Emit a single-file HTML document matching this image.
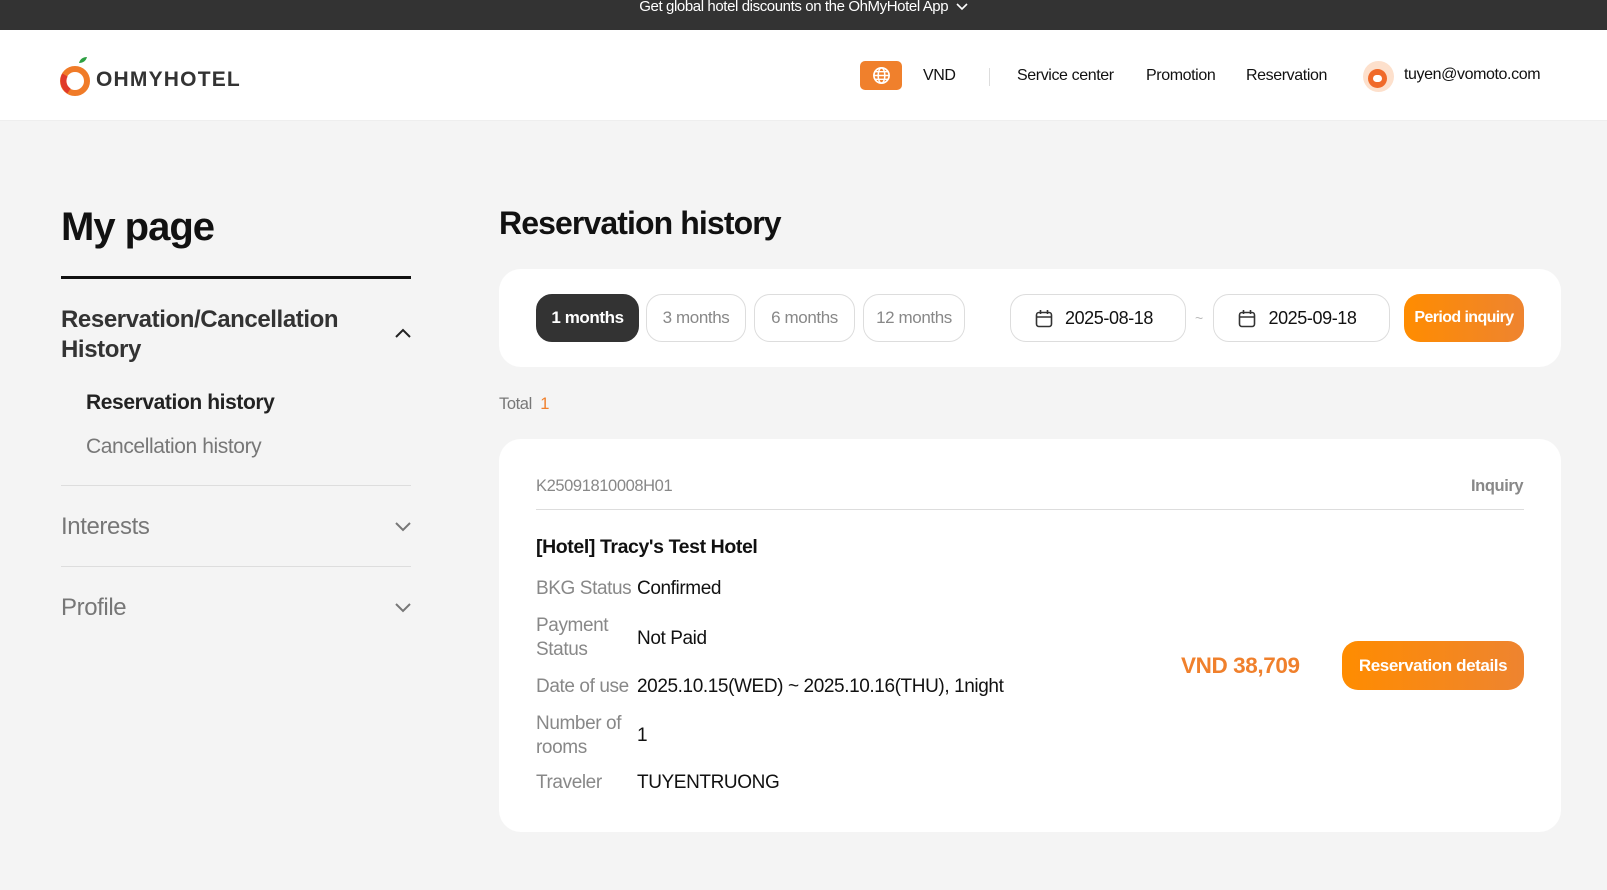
<!DOCTYPE html>
<html><head><meta charset="utf-8"><style>
*{margin:0;padding:0;box-sizing:border-box}
body{width:1607px;height:890px;overflow:hidden;background:#f4f4f4;font-family:"Liberation Sans",sans-serif;color:#222;position:relative;letter-spacing:-0.4px}
.a{position:absolute;white-space:nowrap}
.top{left:0;top:0;width:1607px;height:30px;background:#333;color:#fff;font-size:15px;text-align:center;line-height:14px}
.hdr{left:0;top:30px;width:1607px;height:91px;background:#fff;border-bottom:1px solid #eee}
.nav{font-size:16px;color:#111;top:67px}
.card{background:#fff;border-radius:22px}
.pill{top:294px;height:48px;border:1px solid #ddd;border-radius:16px;font-size:17px;color:#888;text-align:center;line-height:46px;background:#fff}
.og{background:linear-gradient(90deg,#ff8c00,#ee8430);color:#fff;font-weight:bold;border-radius:16px;text-align:center}
.lb{left:536px;font-size:19px;color:#888}
.vl{left:637px;font-size:19px;color:#111}
.side{font-size:24px;color:#777}
.hr{height:1px;background:#ddd}
</style></head><body>
<div class="a top">Get global hotel discounts on the OhMyHotel App &nbsp;<svg width="12" height="8" viewBox="0 0 12 8"><path d="M1 1l5 5 5-5" stroke="#fff" stroke-width="1.6" fill="none"/></svg></div>
<div class="a hdr"></div>
<svg class="a" style="left:60px;top:55px" width="34" height="42" viewBox="0 0 34 42"><path d="M19 8c1-4 4-6 8-6-1 4-4 6-8 6z" fill="#2ea043"/><circle cx="15" cy="26" r="12" fill="none" stroke="#f07b28" stroke-width="6"/><path d="M5 20a12 12 0 0 0 4 16" stroke="#e03a2a" stroke-width="6" fill="none"/></svg>
<div class="a" style="left:96px;top:68px;font-size:21px;font-weight:bold;color:#333;letter-spacing:1.2px">OHMYHOTEL</div>
<div class="a" style="left:860px;top:61px;width:42px;height:29px;background:#f0802c;border-radius:5px"></div>
<svg class="a" style="left:872px;top:66px" width="19" height="19" viewBox="0 0 20 20"><circle cx="10" cy="10" r="8" fill="none" stroke="#fff" stroke-width="1.8"/><ellipse cx="10" cy="10" rx="3.5" ry="8" fill="none" stroke="#fff" stroke-width="1.6"/><path d="M2 10h16M3 6h14M3 14h14" stroke="#fff" stroke-width="1.5"/></svg>
<div class="a nav" style="left:923px">VND</div>
<div class="a" style="left:989px;top:68px;width:1px;height:18px;background:#ddd"></div>
<div class="a nav" style="left:1017px">Service center</div>
<div class="a nav" style="left:1146px">Promotion</div>
<div class="a nav" style="left:1246px">Reservation</div>
<div class="a" style="left:1363px;top:61px;width:31px;height:31px;border-radius:50%;background:#fde0cc"></div>
<div class="a" style="left:1368px;top:69px;width:19px;height:19px;border-radius:50%;background:#f06a2a"></div>
<div class="a" style="left:1373px;top:75px;width:9px;height:7px;border-radius:4px;background:#fff"></div>
<div class="a nav" style="left:1404px;top:66px">tuyen@vomoto.com</div>

<div class="a" style="left:61px;top:205px;font-size:40px;font-weight:bold;color:#111;letter-spacing:-1px">My page</div>
<div class="a" style="left:61px;top:276px;width:350px;height:3px;background:#111"></div>
<div class="a" style="left:61px;top:305px;font-size:24px;font-weight:bold;color:#333;line-height:30px;white-space:normal;width:300px">Reservation/Cancellation History</div>
<svg class="a" style="left:394px;top:328px" width="18" height="11" viewBox="0 0 18 11"><path d="M2 9l7-7 7 7" stroke="#222" stroke-width="2" fill="none"/></svg>
<div class="a" style="left:86px;top:391px;font-size:21px;font-weight:bold;color:#222">Reservation history</div>
<div class="a" style="left:86px;top:435px;font-size:21px;color:#777">Cancellation history</div>
<div class="a hr" style="left:61px;top:485px;width:350px"></div>
<div class="a side" style="left:61px;top:513px">Interests</div>
<svg class="a" style="left:394px;top:521px" width="18" height="11" viewBox="0 0 18 11"><path d="M2 2l7 7 7-7" stroke="#777" stroke-width="2" fill="none"/></svg>
<div class="a hr" style="left:61px;top:566px;width:350px"></div>
<div class="a side" style="left:61px;top:594px">Profile</div>
<svg class="a" style="left:394px;top:602px" width="18" height="11" viewBox="0 0 18 11"><path d="M2 2l7 7 7-7" stroke="#777" stroke-width="2" fill="none"/></svg>

<div class="a" style="left:499px;top:205px;font-size:32px;font-weight:bold;color:#111;letter-spacing:-0.9px">Reservation history</div>
<div class="a card" style="left:499px;top:269px;width:1062px;height:98px"></div>
<div class="a pill" style="left:536px;width:103px;background:#333;color:#fff;font-weight:bold;border-color:#333">1 months</div>
<div class="a pill" style="left:646px;width:100px">3 months</div>
<div class="a pill" style="left:754px;width:101px">6 months</div>
<div class="a pill" style="left:863px;width:102px">12 months</div>
<div class="a pill" style="left:1010px;width:176px;color:#111;font-size:18px;padding-left:22px">2025-08-18</div>
<div class="a" style="left:1195px;top:310px;color:#bbb;font-size:14px">~</div>
<div class="a pill" style="left:1213px;width:177px;color:#111;font-size:18px;padding-left:22px">2025-09-18</div>
<svg class="a" style="left:1035px;top:309px" width="18" height="19" viewBox="0 0 18 19"><rect x="1.5" y="3.5" width="15" height="14" rx="2.5" fill="none" stroke="#333" stroke-width="1.6"/><path d="M1.5 8h15M5.5 1v4M12.5 1v4" stroke="#333" stroke-width="1.6"/></svg>
<svg class="a" style="left:1238px;top:309px" width="18" height="19" viewBox="0 0 18 19"><rect x="1.5" y="3.5" width="15" height="14" rx="2.5" fill="none" stroke="#333" stroke-width="1.6"/><path d="M1.5 8h15M5.5 1v4M12.5 1v4" stroke="#333" stroke-width="1.6"/></svg>
<div class="a og" style="left:1404px;top:294px;width:120px;height:48px;line-height:48px;font-size:16px;letter-spacing:-0.6px">Period inquiry</div>

<div class="a" style="left:499px;top:395px;font-size:16.5px;color:#777">Total &nbsp;<span style="color:#f0802c">1</span></div>

<div class="a card" style="left:499px;top:439px;width:1062px;height:393px"></div>
<div class="a" style="left:536px;top:477px;font-size:16.5px;color:#888">K25091810008H01</div>
<div class="a" style="left:1471px;top:477px;font-size:16.5px;color:#888;font-weight:bold">Inquiry</div>
<div class="a hr" style="left:536px;top:509px;width:988px"></div>
<div class="a" style="left:536px;top:536px;font-size:19.5px;font-weight:bold;color:#111">[Hotel] Tracy's Test Hotel</div>
<div class="a lb" style="top:578px">BKG Status</div><div class="a vl" style="top:578px">Confirmed</div>
<div class="a lb" style="top:614px;line-height:24px">Payment<br>Status</div><div class="a vl" style="top:628px">Not Paid</div>
<div class="a lb" style="top:676px">Date of use</div><div class="a vl" style="top:676px">2025.10.15(WED) ~ 2025.10.16(THU), 1night</div>
<div class="a lb" style="top:712px;line-height:24px">Number of<br>rooms</div><div class="a vl" style="top:725px">1</div>
<div class="a lb" style="top:772px">Traveler</div><div class="a vl" style="top:772px">TUYENTRUONG</div>
<div class="a" style="left:1181px;top:653px;font-size:22.5px;font-weight:bold;color:#f0802c">VND 38,709</div>
<div class="a og" style="left:1342px;top:641px;width:182px;height:49px;line-height:49px;font-size:17px">Reservation details</div>
</body></html>
